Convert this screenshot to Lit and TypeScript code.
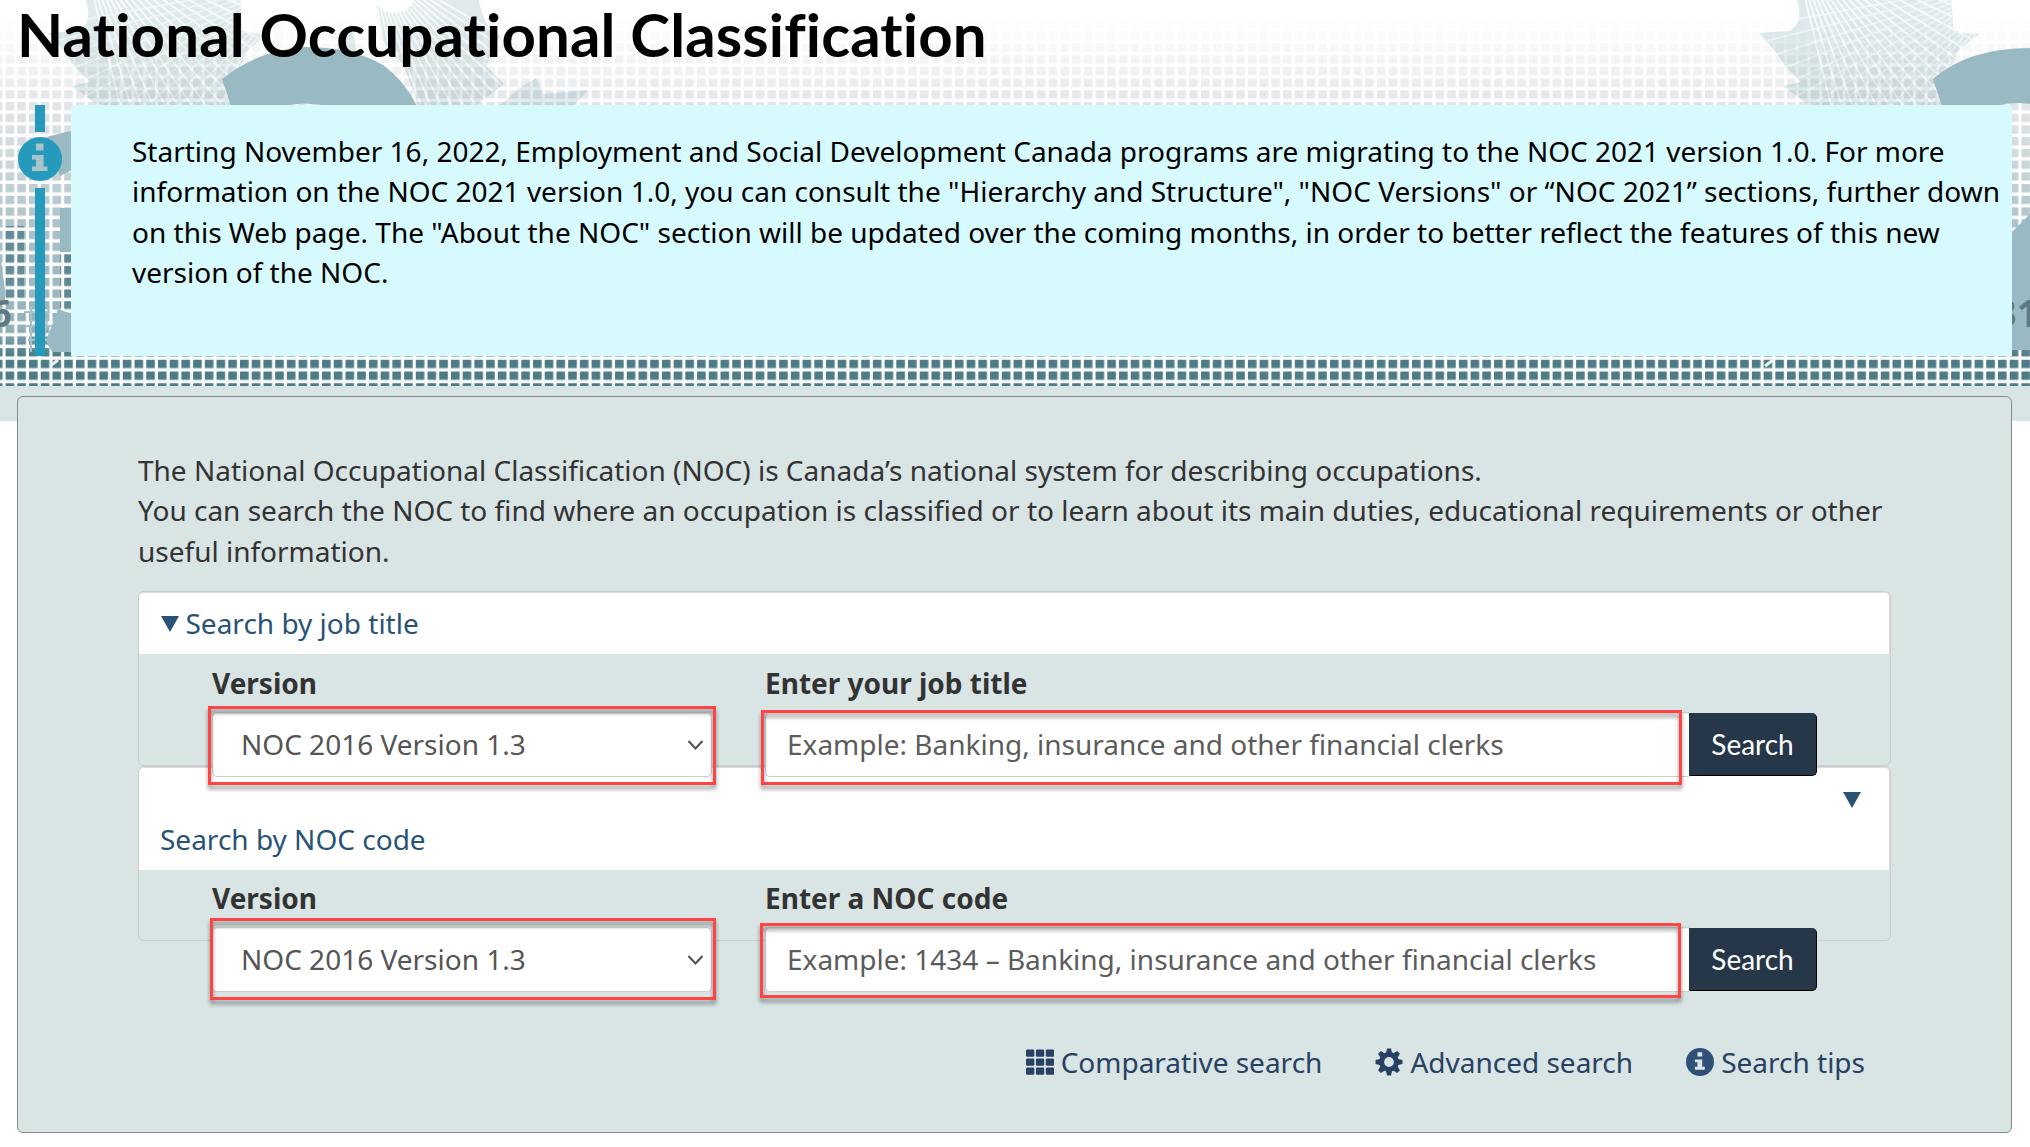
import { LitElement, html, svg, css } from "lit";
import { customElement, property } from "lit/decorators.js";

const fan = (ox: number, oy: number, from: number, to: number, step: number, len: number) => {
  let d = "";
  for (let a = from; a <= to; a += step) {
    const r = (a * Math.PI) / 180;
    d += `M${ox} ${oy} L${(ox + len * Math.cos(r)).toFixed(1)} ${(oy + len * Math.sin(r)).toFixed(1)} `;
  }
  return d;
};

const leafShape = "M84 -6 L88 8 Q90 26 78 31 L48 33 Q66 52 74 66 L90 82 L72 86 L104 110 L228 110 L238 70 L248 50 L268 34 Q240 34 242 24 L240 -6 Z";

const leafTile = svg`
  <path fill="#dfeaec" d=${leafShape}/>
  <g clip-path="url(#leaf)" fill="none" stroke="#f6fafa" stroke-width="2">
    <path d=${fan(80, -60, 22, 78, 3.4, 260)}/>
    <path d=${fan(300, -20, 112, 172, 3.6, 260)} stroke-opacity="0.6"/>
  </g>
  <path fill="#e3ecee" d="M325 56 Q344 48 352 26 L358 56 Z"/>
`;

@customElement("banner-art")
class BannerArt extends LitElement {
  static styles = css`
    :host { display: block; }
    svg { display: block; width: 2030px; height: 386px; }
    text { font: 700 38px "Open Sans", "Noto Sans", sans-serif; fill: #5f7a83; }
    .dots { mix-blend-mode: multiply; }
  `;
  render() {
    return html`<svg viewBox="0 0 2030 386">
      <defs>
        <pattern id="grid" x="5.6" y="8.2" width="11.72" height="11.72" patternUnits="userSpaceOnUse">
          <rect width="11.72" height="11.72" fill="#080808"/>
          <rect width="8.6" height="8.4" rx="0.6" fill="#fff"/>
        </pattern>
        <clipPath id="leaf"><path d=${leafShape}/></clipPath>
        <clipPath id="leaf-two"><path d="M376 4 Q386 16 402 12 Q416 6 412 -4 L478 -4 Q484 30 500 36 L486 66 L504 84 L470 110 L420 110 L404 66 L382 40 Z"/></clipPath>
        <linearGradient id="fade" x1="0" y1="0" x2="0" y2="1">
          <stop offset="0.04" stop-color="#fff"/>
          <stop offset="0.12" stop-color="#f8f8f8"/>
          <stop offset="0.2" stop-color="#eeefef"/>
          <stop offset="0.25" stop-color="#e6e7ec"/>
          <stop offset="0.42" stop-color="#cbd6d9"/>
          <stop offset="0.6" stop-color="#a9c0c7"/>
          <stop offset="0.85" stop-color="#94b1b9"/>
          <stop offset="0.92" stop-color="#4d7c86"/>
          <stop offset="1" stop-color="#4d7c86"/>
        </linearGradient>
        <mask id="dots"><rect width="2030" height="386" fill="url(#grid)"/></mask>
      </defs>
      <rect width="2030" height="386" fill="#fff"/>
      ${leafTile}
      <g transform="translate(1711 0)">${leafTile}</g>
      <path fill="#e0eaec" d="M376 4 Q386 16 402 12 Q416 6 412 -4 L478 -4 Q484 30 500 36 L486 66 L504 84 L470 110 L420 110 L404 66 L382 40 Z"/>
      <g clip-path="url(#leaf-two)" fill="none" stroke="#f6fafa" stroke-width="2"><path d=${fan(370, -40, 30, 86, 3.4, 220)}/></g>
      <path fill="#e2ecee" d="M494 110 L520 88 L536 78 L544 94 L588 90 L570 110 Z"/>
      <g class="dots" mask="url(#dots)">
        <rect width="2030" height="386" fill="url(#fade)"/>
        <rect x="4" y="226" width="20" height="74" fill="#648c96"/>
        <rect x="60" y="252" width="12" height="56" fill="#5f8791"/>
      </g>
      <g fill="#99bac2">
        <path d="M222 79 Q258 50 305 47 Q352 47 383 65 Q404 80 417 106 L328 106 Q305 101 284 106 L231 106 Z"/>
        <path d="M1933 79 Q1968 48 2030 48 V104 Q2014 101 1995 106 L1942 106 Z"/>
        <path d="M44 138 Q56 134 72 131 V170 L60 176 Z"/>
        <path d="M60 208 H72 V252 H60 Z"/>
        <path d="M46 341 L58 309 L72 314 V352 H52 Z"/>
        <path d="M0 254 L5 290 V302 H0 Z"/>
        <path d="M2012 232 L2030 214 V350 H2012 Z"/>
      </g>
      <path d="M24 312 H50 M26 326 H52 M28 340 H48 M31 306 V352 M49 306 L44 340" stroke="#a6c0c7" stroke-width="2" fill="none"/>
      <text x="-10" y="327">6</text>
      <text x="1995" y="327">31</text>
      <path d="M50 366 L58 360 M1765 366 L1773 360" stroke="#eef3f4" stroke-width="3"/>
    </svg>`;
  }
}

@customElement("noc-search-row")
class NocSearchRow extends LitElement {
  @property() label = "";
  @property() hint = "";
  @property() variant = "title";

  static styles = css`
    :host { display: block; position: relative; z-index: 1; }
    .cols { display: grid; grid-template-columns: 500px 977px 128px; padding-left: 73px; }
    .field-b { margin-left: 53px; }
    .label { font-weight: 700; font-size: 28px; line-height: 40px; color: #333; white-space: nowrap; }
    .control {
      position: relative; box-sizing: border-box; height: 65px; margin-top: 9px;
      border: 1px solid #ccc; border-radius: 5px; background: #fff; color: #555;
      display: flex; align-items: center; white-space: nowrap; font-size: 28px;
      box-shadow: inset 0 1px 1px rgba(0, 0, 0, .08);
    }
    .code .control { padding-top: 1px; }
    .select { padding: 0 7px 0 28px; justify-content: space-between; }
    .select svg { width: 17px; height: 12px; }
    .input { padding-left: 21px; border-right: 0; border-radius: 5px 0 0 5px; color: #5c5c5c; }
    .button {
      box-sizing: border-box; height: 63px; margin-top: 50px;
      background: #26374a; border: 1px solid #26374a; border-right-color: #000; border-bottom-color: #000;
      border-radius: 0 5px 5px 0; color: #fff; font: 400 28px/60px Lato, sans-serif;
      text-align: center; padding-right: 1px;
    }
    .code .button { line-height: 61px; }
    .ring { position: absolute; border: 3px solid #f44; filter: drop-shadow(0 4px 2px rgba(0, 0, 0, .42)); }
    .title .select .ring { inset: -7px -5px -9px -5px; }
    .title .input .ring { inset: -3px 7px -9px -5px; }
    .code .select .ring { inset: -10px -5px -9px -3px; }
    .code .input .ring { inset: -5px 8px -7px -6px; }
  `;
  render() {
    return html`<div class="cols ${this.variant}">
      <div>
        <div class="label">Version</div>
        <div class="control select"><span>NOC 2016 Version 1.3</span>
          <svg viewBox="0 0 17 12"><path d="M1.5 2 L8.5 9.5 L15.5 2" fill="none" stroke="#505050" stroke-width="2"/></svg>
          <div class="ring"></div>
        </div>
      </div>
      <div class="field-b">
        <div class="label">${this.label}</div>
        <div class="control input"><span>${this.hint}</span><div class="ring"></div></div>
      </div>
      <div class="button">Search</div>
    </div>`;
  }
}

@customElement("app-root")
class AppRoot extends LitElement {
  static styles = css`
    :host {
      display: block; position: relative; width: 2030px; height: 1147px; overflow: hidden;
      background: #fff; font-family: "Noto Sans", sans-serif; font-size: 28px; line-height: 40.4px; color: #333;
    }
    .art { position: absolute; left: 0; top: 0; }
    .band { position: absolute; left: 0; top: 386px; width: 2030px; height: 35px; background: #d9e4e5; }
    .page { position: relative; display: flex; flex-direction: column; height: 1147px; box-sizing: border-box; padding: 0 18px 0 17px; }
    h1 { margin: -2px 0 0; height: 107px; font: 700 60px/72px Lato, sans-serif; letter-spacing: .13px; font-variant-ligatures: none; color: #000; white-space: nowrap; }
    .notice { display: grid; grid-template-columns: 54px 1fr; height: 251px; flex: none; }
    .rail { display: flex; flex-direction: column; align-items: center; padding-right: 8px; }
    .bar { width: 10px; background: #269abc; }
    .bar.top { height: 27px; }
    .bar.rest { flex: 1; }
    .rail svg { width: 44px; height: 44px; margin: 5px 0 7px; flex: none; }
    .message { background: #d7faff; color: #000; padding: 26px 0 0 61px; white-space: nowrap; }
    .panel {
      margin-top: 40px; box-sizing: border-box; height: 737px; flex: none; border: 1px solid #83898c; border-radius: 6px;
      background: #d9e4e5; padding: 53px 120px 0 120px; display: flex; flex-direction: column;
    }
    .intro { height: 141px; white-space: nowrap; }
    .acc { box-sizing: border-box; height: 174.5px; flex: none; border: 1px solid #ccc; border-radius: 6px; }
    .acc + .acc { height: 175.5px; }
    .head { box-sizing: border-box; background: #fff; border: 1px solid #ddd; border-width: 1px 1px 0 0; border-radius: 5px 5px 0 0; color: #295376; padding: 0 21px; }
    .one { height: 62px; display: flex; align-items: center; gap: 7px; padding-left: 21.5px; }
    .two { height: 103px; display: flex; flex-direction: column; padding-top: 11px; }
    .tri { display: block; width: 18px; height: 16px; flex: none; }
    .two .tri { align-self: flex-end; margin: 13px 7px 11px 0; }
    .body-one { margin-top: 9px; }
    .body-two { margin-top: 8px; }
    .links { display: flex; justify-content: flex-end; color: #284162; margin-top: 101px; padding-right: 26px; white-space: nowrap; }
    .link { display: flex; align-items: center; }
    .link + .link { margin-left: 53px; }
    .link svg { width: 28px; height: 28px; margin-right: 7px; }
  `;

  private tri() {
    return html`<svg class="tri" viewBox="0 0 18 16"><path d="M0 0 H18 L9 16 Z" fill="#295376"/></svg>`;
  }

  private info(fill: string, hole: string) {
    return html`<svg viewBox="0 0 44 44"><circle cx="22" cy="22" r="22" fill=${fill}/>
      <path fill=${hole} d="M18 6.5 h7.5 v7 h-7.5 z M14 18 h11.5 v11.5 h4 v4.5 H14 v-4.5 h4 v-7 h-4 z"/></svg>`;
  }

  render() {
    const cells = [0, 1, 2].flatMap((r) => [0, 1, 2].map((c) => svg`<rect x=${c * 9.9} y=${1.5 + r * 9} width="8.3" height="7.3" rx="1.2"/>`));
    const teeth = [0, 45, 90, 135, 180, 225, 270, 315].map((a) => svg`<path d="M11 5 L12 0.5 H16 L17 5 Z" transform="rotate(${a} 14 14)"/>`);
    return html`
      <banner-art class="art"></banner-art>
      <div class="band"></div>
      <div class="page">
        <h1>National Occupational Classification</h1>
        <section class="notice">
          <div class="rail">
            <div class="bar top"></div>
            ${this.info("#269abc", "#a9c4cb")}
            <div class="bar rest"></div>
          </div>
          <div class="message">
            Starting November 16, 2022, Employment and Social Development Canada programs are migrating to the NOC 2021 version 1.0. For more<br>
            information on the NOC 2021 version 1.0, you can consult the "Hierarchy and Structure", "NOC Versions" or “NOC 2021” sections, further down<br>
            on this Web page. The "About the NOC" section will be updated over the coming months, in order to better reflect the features of this new<br>
            version of the NOC.
          </div>
        </section>
        <main class="panel">
          <div class="intro">
            The National Occupational Classification (NOC) is Canada’s national system for describing occupations.<br>
            You can search the NOC to find where an occupation is classified or to learn about its main duties, educational requirements or other<br>
            useful information.
          </div>
          <section class="acc">
            <div class="head one">${this.tri()}<span>Search by job title</span></div>
            <noc-search-row class="body-one" variant="title" label="Enter your job title"
              hint="Example: Banking, insurance and other financial clerks"></noc-search-row>
          </section>
          <section class="acc">
            <div class="head two">${this.tri()}<span>Search by NOC code</span></div>
            <noc-search-row class="body-two" variant="code" label="Enter a NOC code"
              hint="Example: 1434 – Banking, insurance and other financial clerks"></noc-search-row>
          </section>
          <nav class="links">
            <span class="link"><svg viewBox="0 0 28 28" fill="#284162">${cells}</svg>Comparative search</span>
            <span class="link"><svg viewBox="0 0 28 28" fill="#284162">${teeth}<circle cx="14" cy="14" r="7.4" fill="none" stroke="#284162" stroke-width="5"/></svg>Advanced search</span>
            <span class="link">${this.info("#30507a", "#d9e4e5")}Search tips</span>
          </nav>
        </main>
      </div>`;
  }
}
